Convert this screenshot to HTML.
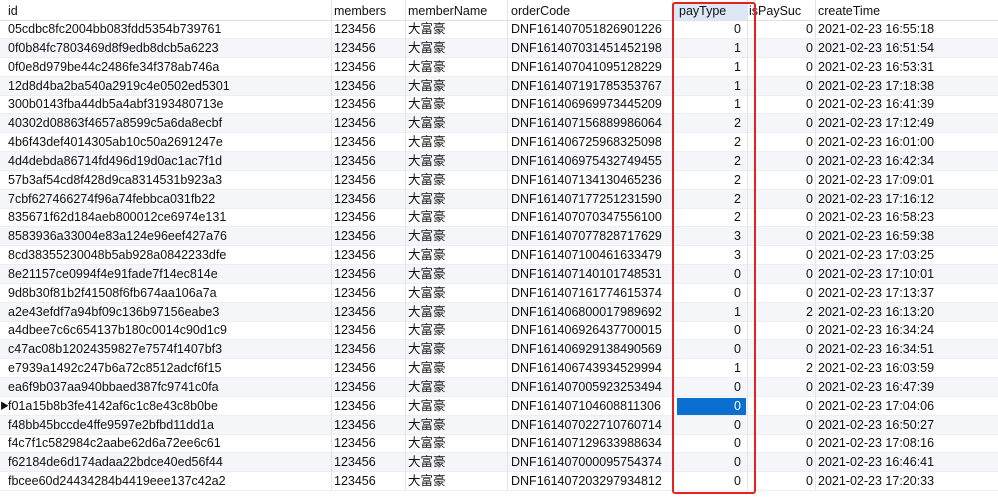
<!DOCTYPE html><html><head><meta charset="utf-8"><style>
body{margin:0;width:998px;height:500px;overflow:hidden;background:#fff;font-family:"Liberation Sans","Noto Sans CJK SC",sans-serif;font-size:12.5px;color:#111;position:relative}
.r{position:absolute;left:0;width:998px;height:19px;line-height:19px;border-bottom:1px solid #eceef1;box-sizing:border-box}
.g{background:#f4f6f9}
.c{position:absolute;top:0;white-space:nowrap}
.v{position:absolute;top:0;bottom:0;width:1px;background:#e3e5e8}
</style></head><body>
<div class="r" style="top:1px;height:20px;line-height:20px;background:#fff;border-bottom:1px solid #dfe2e6">
<div style="position:absolute;left:674px;top:1px;width:73px;height:18px;background:#dce8f5"></div>
<span class="c" style="left:8px">id</span><span class="c" style="left:334px">members</span><span class="c" style="left:408px">memberName</span><span class="c" style="left:511px">orderCode</span><span class="c" style="left:679px">payType</span><span class="c" style="left:749px">isPaySuc</span><span class="c" style="left:818px">createTime</span></div>
<div id="rows"></div>
<div class="v" style="left:331px;height:490px"></div><div class="v" style="left:405px;height:490px"></div><div class="v" style="left:507px;height:490px"></div><div class="v" style="left:672px;height:490px"></div><div class="v" style="left:747px;height:490px"></div><div class="v" style="left:815px;height:490px"></div>
<div style="position:absolute;left:672px;top:2px;width:84px;height:492px;border:2.5px solid #e52222;border-radius:3px;box-sizing:border-box"></div>
<script>
var d=[["05cdbc8fc2004bb083fdd5354b739761","DNF161407051826901226",0,0,"16:55:18"],
["0f0b84fc7803469d8f9edb8dcb5a6223","DNF161407031451452198",1,0,"16:51:54"],
["0f0e8d979be44c2486fe34f378ab746a","DNF161407041095128229",1,0,"16:53:31"],
["12d8d4ba2ba540a2919c4e0502ed5301","DNF161407191785353767",1,0,"17:18:38"],
["300b0143fba44db5a4abf3193480713e","DNF161406969973445209",1,0,"16:41:39"],
["40302d08863f4657a8599c5a6da8ecbf","DNF161407156889986064",2,0,"17:12:49"],
["4b6f43def4014305ab10c50a2691247e","DNF161406725968325098",2,0,"16:01:00"],
["4d4debda86714fd496d19d0ac1ac7f1d","DNF161406975432749455",2,0,"16:42:34"],
["57b3af54cd8f428d9ca8314531b923a3","DNF161407134130465236",2,0,"17:09:01"],
["7cbf627466274f96a74febbca031fb22","DNF161407177251231590",2,0,"17:16:12"],
["835671f62d184aeb800012ce6974e131","DNF161407070347556100",2,0,"16:58:23"],
["8583936a33004e83a124e96eef427a76","DNF161407077828717629",3,0,"16:59:38"],
["8cd38355230048b5ab928a0842233dfe","DNF161407100461633479",3,0,"17:03:25"],
["8e21157ce0994f4e91fade7f14ec814e","DNF161407140101748531",0,0,"17:10:01"],
["9d8b30f81b2f41508f6fb674aa106a7a","DNF161407161774615374",0,0,"17:13:37"],
["a2e43efdf7a94bf09c136b97156eabe3","DNF161406800017989692",1,2,"16:13:20"],
["a4dbee7c6c654137b180c0014c90d1c9","DNF161406926437700015",0,0,"16:34:24"],
["c47ac08b12024359827e7574f1407bf3","DNF161406929138490569",0,0,"16:34:51"],
["e7939a1492c247b6a72c8512adcf6f15","DNF161406743934529994",1,2,"16:03:59"],
["ea6f9b037aa940bbaed387fc9741c0fa","DNF161407005923253494",0,0,"16:47:39"],
["f01a15b8b3fe4142af6c1c8e43c8b0be","DNF161407104608811306",0,0,"17:04:06"],
["f48bb45bccde4ffe9597e2bfbd11dd1a","DNF161407022710760714",0,0,"16:50:27"],
["f4c7f1c582984c2aabe62d6a72ee6c61","DNF161407129633988634",0,0,"17:08:16"],
["f62184de6d174adaa22bdce40ed56f44","DNF161407000095754374",0,0,"16:46:41"],
["fbcee60d24434284b4419eee137c42a2","DNF161407203297934812",0,0,"17:20:33"]];
var h="";
d.forEach(function(r,i){var t=20+i*18.84;
h+='<div class="r'+(i%2?' g':'')+'" style="top:'+t+'px">';
if(i==20)h+='<div style="position:absolute;left:677px;top:1px;width:69px;height:17px;background:#0a6fd1"></div><span class="c" style="left:0;font-size:9px">&#9654;</span>';
h+='<span class="c" style="left:8px">'+r[0]+'</span><span class="c" style="left:334px">123456</span><span class="c" style="left:408px">大富豪</span><span class="c" style="left:511px">'+r[1]+'</span><span class="c" style="left:734px;'+(i==20?'color:#fff':'')+'">'+r[2]+'</span><span class="c" style="left:806px">'+r[3]+'</span><span class="c" style="left:818px">2021-02-23 '+r[4]+'</span></div>';});
document.getElementById("rows").innerHTML=h;
</script>
</body></html>
